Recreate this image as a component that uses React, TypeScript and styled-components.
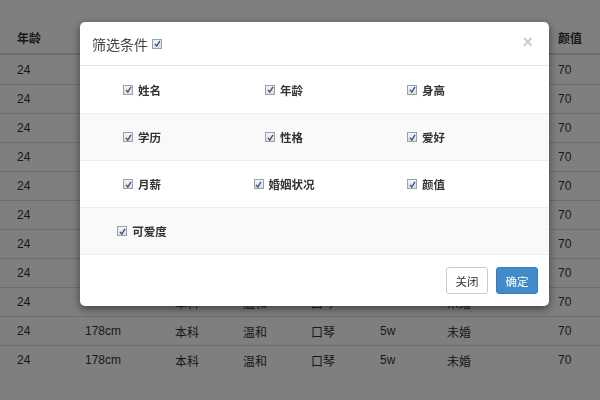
import styled, { createGlobalStyle } from "styled-components";

const GlobalStyle = createGlobalStyle`
  html, body {
    margin: 0;
    padding: 0;
    background: #fff;
    font-family: "Liberation Sans", "Noto Sans CJK SC", sans-serif;
    font-size: 12px;
    color: #333;
    overflow: hidden;
  }
`;

const Page = styled.div`
  width: 600px;
  height: 400px;
  padding-top: 22px;
  box-sizing: border-box;
`;

const Cols = `
  display: grid;
  grid-template-columns: 9px 68px 90px 68px 68px 69px 67px 111px 1fr;
`;

const HeadRow = styled.div`
  ${Cols}
  height: 31px;
  align-items: center;
  border-bottom: 2px solid #ddd;
  font-weight: bold;
`;

const Row = styled.div`
  ${Cols}
  height: 29px;
  align-items: center;
  border-top: 1px solid #ddd;
  box-sizing: border-box;
  &:first-child {
    border-top: 0;
  }
`;

const Cell = styled.div`
  padding-left: 8px;
  white-space: nowrap;
`;

const Backdrop = styled.div`
  position: fixed;
  inset: 0;
  background: rgba(0, 0, 0, 0.5);
`;

const Modal = styled.div`
  position: absolute;
  left: 80px;
  top: 22px;
  width: 469px;
  background: #fff;
  border-radius: 5px;
  box-shadow: 0 3px 9px rgba(0, 0, 0, 0.5);
  overflow: hidden;
`;

const Header = styled.div`
  height: 43px;
  display: flex;
  align-items: center;
  padding: 0 12px;
  border-bottom: 1px solid #e5e5e5;
`;

const Title = styled.div`
  font-size: 14px;
  color: #444;
  display: flex;
  align-items: center;
  gap: 4px;
`;

const Close = styled.div`
  margin-left: auto;
  font-size: 18px;
  font-weight: bold;
  color: #000;
  opacity: 0.2;
  line-height: 1;
  margin-top: -4px;
  margin-right: 4px;
`;

const OptionRow = styled.div<{ $striped?: boolean }>`
  display: grid;
  grid-template-columns: repeat(3, 100px);
  column-gap: 42px;
  padding-left: 12px;
  height: 47px;
  box-sizing: border-box;
  align-items: center;
  background: ${(p) => (p.$striped ? "#f9f9f9" : "#fff")};
  border-top: 1px solid #eee;
  &:first-child {
    border-top: 0;
  }
`;

const Option = styled.label`
  display: flex;
  justify-content: center;
  align-items: center;
  gap: 5px;
  font-weight: bold;
  font-size: 11.5px;
  color: #333;
`;

const Box = styled.span`
  width: 10px;
  height: 10px;
  box-sizing: border-box;
  border: 1px solid #a0a0a0;
  background: linear-gradient(#f4f4f4, #dcdcdc);
  display: inline-flex;
  align-items: center;
  justify-content: center;
`;

const Footer = styled.div`
  height: 52px;
  border-top: 1px solid #eee;
  box-sizing: border-box;
  display: flex;
  justify-content: flex-end;
  align-items: center;
  gap: 8px;
  padding: 0 11px 0 0;
`;

const Button = styled.button<{ $primary?: boolean }>`
  width: 42px;
  height: 27px;
  border-radius: 3px;
  font-family: inherit;
  font-size: 11.5px;
  padding: 0;
  border: 1px solid ${(p) => (p.$primary ? "#357ebd" : "#ccc")};
  background: ${(p) => (p.$primary ? "#428bca" : "#fff")};
  color: ${(p) => (p.$primary ? "#fff" : "#333")};
`;

function Check() {
  return (
    <Box>
      <svg width="7" height="7" viewBox="0 0 7 7">
        <path d="M1 3.8 L2.8 6 L6 0.8" stroke="#2a4f9a" strokeWidth="1.3" fill="none" />
      </svg>
    </Box>
  );
}

const heads = ["年龄", "身高", "学历", "性格", "爱好", "月薪", "婚姻状况", "颜值"];
const rowData = ["24", "178cm", "本科", "温和", "口琴", "5w", "未婚", "70"];

const options = [
  ["姓名", "年龄", "身高"],
  ["学历", "性格", "爱好"],
  ["月薪", "婚姻状况", "颜值"],
  ["可爱度"],
];

export default function App() {
  return (
    <>
      <GlobalStyle />
      <Page>
        <HeadRow>
          <span />
          {heads.map((h) => (
            <Cell key={h}>{h}</Cell>
          ))}
        </HeadRow>
        <div>
          {Array.from({ length: 11 }).map((_, i) => (
            <Row key={i}>
              <span />
              {rowData.map((d, j) => (
                <Cell key={j}>{d}</Cell>
              ))}
            </Row>
          ))}
        </div>
      </Page>
      <Backdrop>
        <Modal>
          <Header>
            <Title>
              筛选条件 <Check />
            </Title>
            <Close>×</Close>
          </Header>
          <div>
            {options.map((row, i) => (
              <OptionRow key={i} $striped={i % 2 === 1}>
                {row.map((o) => (
                  <Option key={o}>
                    <Check />
                    {o}
                  </Option>
                ))}
              </OptionRow>
            ))}
          </div>
          <Footer>
            <Button>关闭</Button>
            <Button $primary>确定</Button>
          </Footer>
        </Modal>
      </Backdrop>
    </>
  );
}
